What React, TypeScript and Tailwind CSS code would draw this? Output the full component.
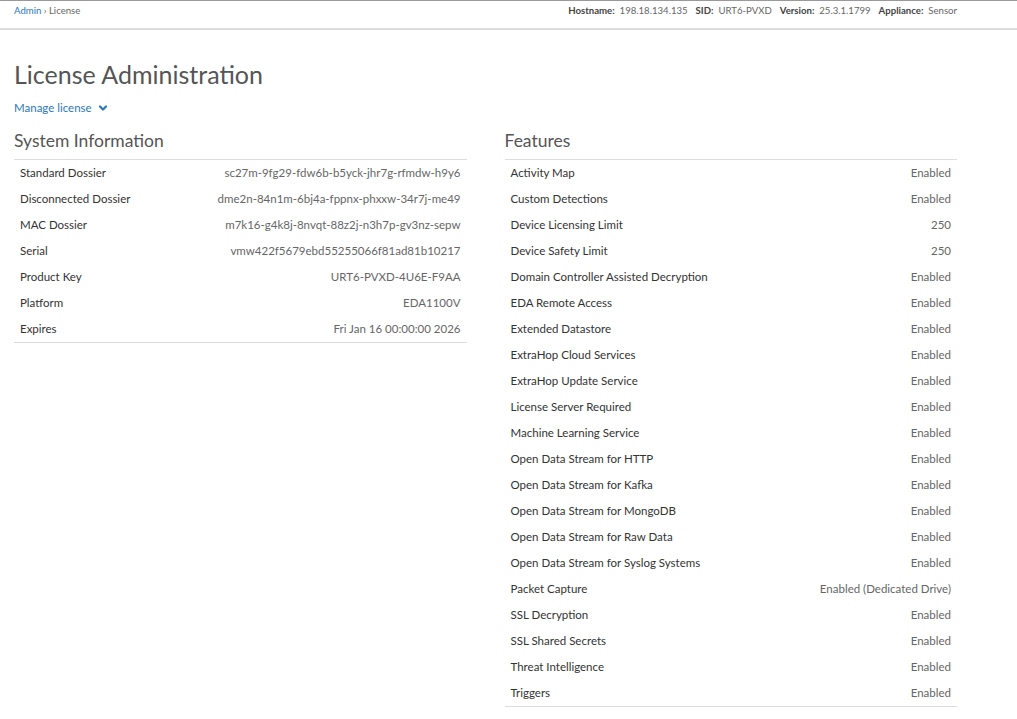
import React from 'react';
import { ChevronDown } from 'lucide-react';

const systemInfo: [string, string][] = [
    ['Standard Dossier', 'sc27m-9fg29-fdw6b-b5yck-jhr7g-rfmdw-h9y6'],
    ['Disconnected Dossier', 'dme2n-84n1m-6bj4a-fppnx-phxxw-34r7j-me49'],
    ['MAC Dossier', 'm7k16-g4k8j-8nvqt-88z2j-n3h7p-gv3nz-sepw'],
    ['Serial', 'vmw422f5679ebd55255066f81ad81b10217'],
    ['Product Key', 'URT6-PVXD-4U6E-F9AA'],
    ['Platform', 'EDA1100V'],
    ['Expires', 'Fri Jan 16 00:00:00 2026'],
];

const features: [string, string][] = [
    ['Activity Map', 'Enabled'],
    ['Custom Detections', 'Enabled'],
    ['Device Licensing Limit', '250'],
    ['Device Safety Limit', '250'],
    ['Domain Controller Assisted Decryption', 'Enabled'],
    ['EDA Remote Access', 'Enabled'],
    ['Extended Datastore', 'Enabled'],
    ['ExtraHop Cloud Services', 'Enabled'],
    ['ExtraHop Update Service', 'Enabled'],
    ['License Server Required', 'Enabled'],
    ['Machine Learning Service', 'Enabled'],
    ['Open Data Stream for HTTP', 'Enabled'],
    ['Open Data Stream for Kafka', 'Enabled'],
    ['Open Data Stream for MongoDB', 'Enabled'],
    ['Open Data Stream for Raw Data', 'Enabled'],
    ['Open Data Stream for Syslog Systems', 'Enabled'],
    ['Packet Capture', 'Enabled (Dedicated Drive)'],
    ['SSL Decryption', 'Enabled'],
    ['SSL Shared Secrets', 'Enabled'],
    ['Threat Intelligence', 'Enabled'],
    ['Triggers', 'Enabled'],
];

const InfoTable: React.FC<{ title: string; rows: [string, string][] }> = ({ title, rows }) => (
    <div>
        <h2 className="text-[17.5px] leading-[24px] text-[#555] pt-[1px] pb-[6px] border-b border-[#ddd]">{title}</h2>
        <div className="border-b border-[#ddd]">
            {rows.map(([label, value]) => (
                <div key={label} className="flex justify-between items-center h-[26px] px-[6px] text-[11.5px]">
                    <span className="text-[#333]">{label}</span>
                    <span className="text-[#666]">{value}</span>
                </div>
            ))}
        </div>
    </div>
);

const App: React.FC = () => {
    return (
        <div className="min-h-screen bg-white font-['Lato','Liberation_Sans',sans-serif]">
            {/* top bar */}
            <div className="h-[30px] border-t border-[#999] border-b-2 border-b-[#ddd] flex items-start justify-between pt-[3px] pl-[14px] pr-[60px] text-[9.6px] leading-[14px]">
                <div>
                    <span className="text-[#2a78c0]">Admin</span>
                    <span className="text-[#666]"> › License</span>
                </div>
                <div className="text-[#666] flex gap-[8px]">
                    <span><b className="text-[#444]">Hostname:</b>&nbsp; 198.18.134.135</span>
                    <span><b className="text-[#444]">SID:</b>&nbsp; URT6-PVXD</span>
                    <span><b className="text-[#444]">Version:</b>&nbsp; 25.3.1.1799</span>
                    <span><b className="text-[#444]">Appliance:</b>&nbsp; Sensor</span>
                </div>
            </div>

            <div className="pl-[14px] w-[957px]">
                <h1 className="mt-[28px] text-[25px] leading-[32px] text-[#555]">License Administration</h1>
                <button className="mt-[10px] flex items-center gap-[5px] text-[11.5px] leading-[16px] text-[#2a78c0]">
                    Manage license
                    <ChevronDown size={12} strokeWidth={4.5} />
                </button>

                <div className="mt-[12px] grid grid-cols-2 gap-[38px]">
                    <InfoTable title="System Information" rows={systemInfo} />
                    <InfoTable title="Features" rows={features} />
                </div>
            </div>
        </div>
    );
};

export default App;
